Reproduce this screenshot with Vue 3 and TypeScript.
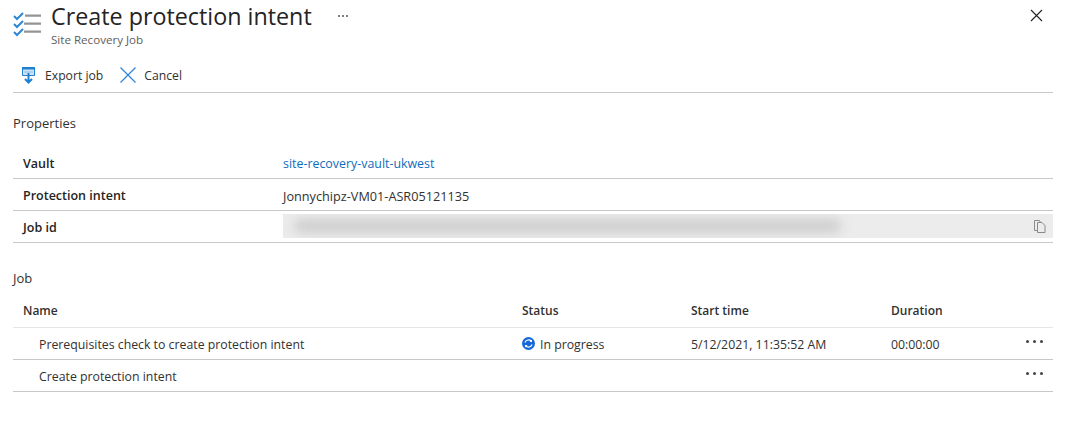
<script setup lang="ts">
interface Prop { label: string; value: string; link?: boolean }
const props: Prop[] = [
  { label: 'Vault', value: 'site-recovery-vault-ukwest', link: true },
  { label: 'Protection intent', value: 'Jonnychipz-VM01-ASR05121135' },
]
interface Step { name: string; status: string; start: string; duration: string }
const steps: Step[] = [
  { name: 'Prerequisites check to create protection intent', status: 'In progress', start: '5/12/2021, 11:35:52 AM', duration: '00:00:00' },
  { name: 'Create protection intent', status: '', start: '', duration: '' },
]
</script>

<template>
  <div class="page">
    <header class="head">
      <svg class="logo" width="30" height="30" viewBox="0 0 30 30" fill="none">
        <path d="M1 7l3 3 6-6M1 15l3 3 6-6M1 23l3 3 6-6" stroke="#2f86d6" stroke-width="2" />
        <path d="M12 6.600h16M11 14.600h17M11 22.600h17" stroke="#949494" stroke-width="2.200" />
      </svg>
      <div class="titles">
        <div class="title-row">
          <h1>Create protection intent</h1>
          <span class="title-more"><i></i><i></i><i></i></span>
        </div>
        <div class="sub">Site Recovery Job</div>
      </div>
      <svg class="close" width="13" height="13" viewBox="0 0 13 13">
        <path d="M1 1l11 11M12 1L1 12" stroke="#222" stroke-width="1.100" fill="none" />
      </svg>
    </header>

    <div class="toolbar">
      <button class="tool">
        <svg width="14" height="17" viewBox="0 0 14 17" fill="none">
          <path d="M.5.500h12v8H.500z" fill="#cfe3f5" stroke="#1f7fd1" />
          <path d="M0 0h13v2.500H0z" fill="#1f7fd1" />
          <path d="M2 5h9" stroke="#8fbde6" />
          <path d="M6.500 6v9.500M3 12l3.500 3.500L10 12" stroke="#1f7fd1" stroke-width="2" />
        </svg>
        Export job
      </button>
      <button class="tool">
        <svg width="16" height="16" viewBox="0 0 16 16">
          <path d="M.5.500l15 15M15.500.500l-15 15" stroke="#2f86d6" stroke-width="1.300" fill="none" />
        </svg>
        Cancel
      </button>
    </div>

    <h2 class="section first">Properties</h2>
    <div class="props">
      <div v-for="p in props" :key="p.label" class="prop">
        <span class="label">{{ p.label }}</span>
        <a v-if="p.link" class="link">{{ p.value }}</a>
        <span v-else class="plain">{{ p.value }}</span>
      </div>
      <div class="prop">
        <span class="label">Job id</span>
        <div class="copybox">
          <div class="blur"></div>
          <svg class="copy" width="12" height="13" viewBox="0 0 12 13" fill="none" stroke="#8a8a8a">
            <path d="M3.500 10.500H.5V.5h5l1 2" />
            <path d="M3.500 2.500h4.500l3 3v7h-7.500z" fill="#ececec" />
          </svg>
        </div>
      </div>
    </div>

    <h2 class="section second">Job</h2>
    <div class="grid gridhead">
      <span>Name</span><span>Status</span><span>Start time</span><span>Duration</span><span></span>
    </div>
    <div v-for="s in steps" :key="s.name" class="grid gridrow">
      <span class="name">{{ s.name }}</span>
      <span class="status">
        <svg v-if="s.status" class="spin" width="13" height="13" viewBox="0 0 13 13" fill="none">
          <circle cx="6.500" cy="6.500" r="6.500" fill="#1668d8" />
          <path d="M3 5.500a3.700 3.700 0 0 1 6.300-1.300M10 7.500a3.700 3.700 0 0 1-6.300 1.300" stroke="#fff" stroke-width="1.200" />
          <path d="M10 2.500v2.500H7.500M3 10.500V8h2.500" fill="#fff" />
        </svg>
        {{ s.status }}
      </span>
      <span>{{ s.start }}</span>
      <span>{{ s.duration }}</span>
      <span class="more"><i></i><i></i><i></i></span>
    </div>
  </div>
</template>

<style>
html, body { background: #fff; }
</style>

<style scoped>
.page {
  width: 1071px;
  height: 429px;
  box-sizing: border-box;
  padding: 0 18px 0 13px;
  font-family: "Open Sans", "Noto Sans", sans-serif;
  font-size: 12.300px;
  color: #323130;
  overflow: hidden;
  background: #fff;
}
.head { display: flex; align-items: flex-start; height: 58px; }
.logo { margin-top: 9px; margin-right: 8px; flex: none; }
.titles { flex: 1; }
.title-row { display: flex; align-items: center; height: 32px; }
h1 { margin: 0; font-size: 23.300px; font-weight: 400; line-height: 32px; color: #252423; }
.title-more { display: flex; gap: 2px; margin-left: 26px; }
.title-more i { width: 2px; height: 2px; border-radius: 50%; background: #555; }
.sub { font-size: 11.600px; line-height: 14px; margin-top: 1px; color: #605e5c; }
.close { margin-top: 9px; margin-right: 10px; }
.toolbar {
  display: flex;
  align-items: center;
  height: 35px;
  padding-left: 9px;
  gap: 17px;
  border-bottom: 1px solid #c8c8c8;
  box-sizing: border-box;
}
.tool {
  display: flex;
  align-items: center;
  gap: 9px;
  border: 0;
  padding: 0;
  background: none;
  font: inherit;
  font-size: 12.200px;
  color: #323130;
}
.tool + .tool { gap: 8px; }
.section { margin: 0; font-size: 13px; font-weight: 400; line-height: 18px; color: #323130; }
.first { margin-top: 21px; }
.second { margin-top: 26px; }
.props { margin-top: 15px; }
.prop {
  display: grid;
  grid-template-columns: 260px 1fr;
  align-items: center;
  height: 32px;
  box-sizing: border-box;
  border-bottom: 1px solid #c8c8c8;
  padding-left: 10px;
}
.label { font-weight: 600; font-size: 12.500px; color: #252423; padding-top: 2px; }
.link { color: #0f6cbd; font-size: 12.400px; padding-top: 2px; }
.plain { font-size: 12.700px; padding-top: 2px; }
.copybox {
  position: relative;
  height: 24px;
  margin-bottom: 1px;
  background: #ececec;
  overflow: hidden;
  display: flex;
  align-items: center;
  justify-content: flex-end;
  padding-right: 7px;
}
.blur {
  position: absolute;
  left: 12px;
  top: 6px;
  width: 545px;
  height: 12px;
  background: #c9c9c9;
  filter: blur(6px);
}
.copy { position: relative; }
.grid {
  display: grid;
  grid-template-columns: 499px 169px 200px 1fr 27px;
  align-items: center;
  padding-left: 10px;
  box-sizing: border-box;
}
.gridhead {
  height: 33px;
  margin-top: 8px;
  padding-bottom: 2px;
  font-weight: 600;
  font-size: 12px;
  color: #323130;
  border-bottom: 1px solid #e6e6e6;
}
.gridrow { height: 32px; padding-top: 2px; border-bottom: 1px solid #c8c8c8; }
.name { padding-left: 16px; }
.status { display: flex; align-items: center; gap: 5px; }
.spin { margin-top: -2px; }
.more { display: flex; gap: 4px; align-items: center; margin-top: -7px; }
.more i { width: 3px; height: 3px; border-radius: 50%; background: #444; }
</style>
